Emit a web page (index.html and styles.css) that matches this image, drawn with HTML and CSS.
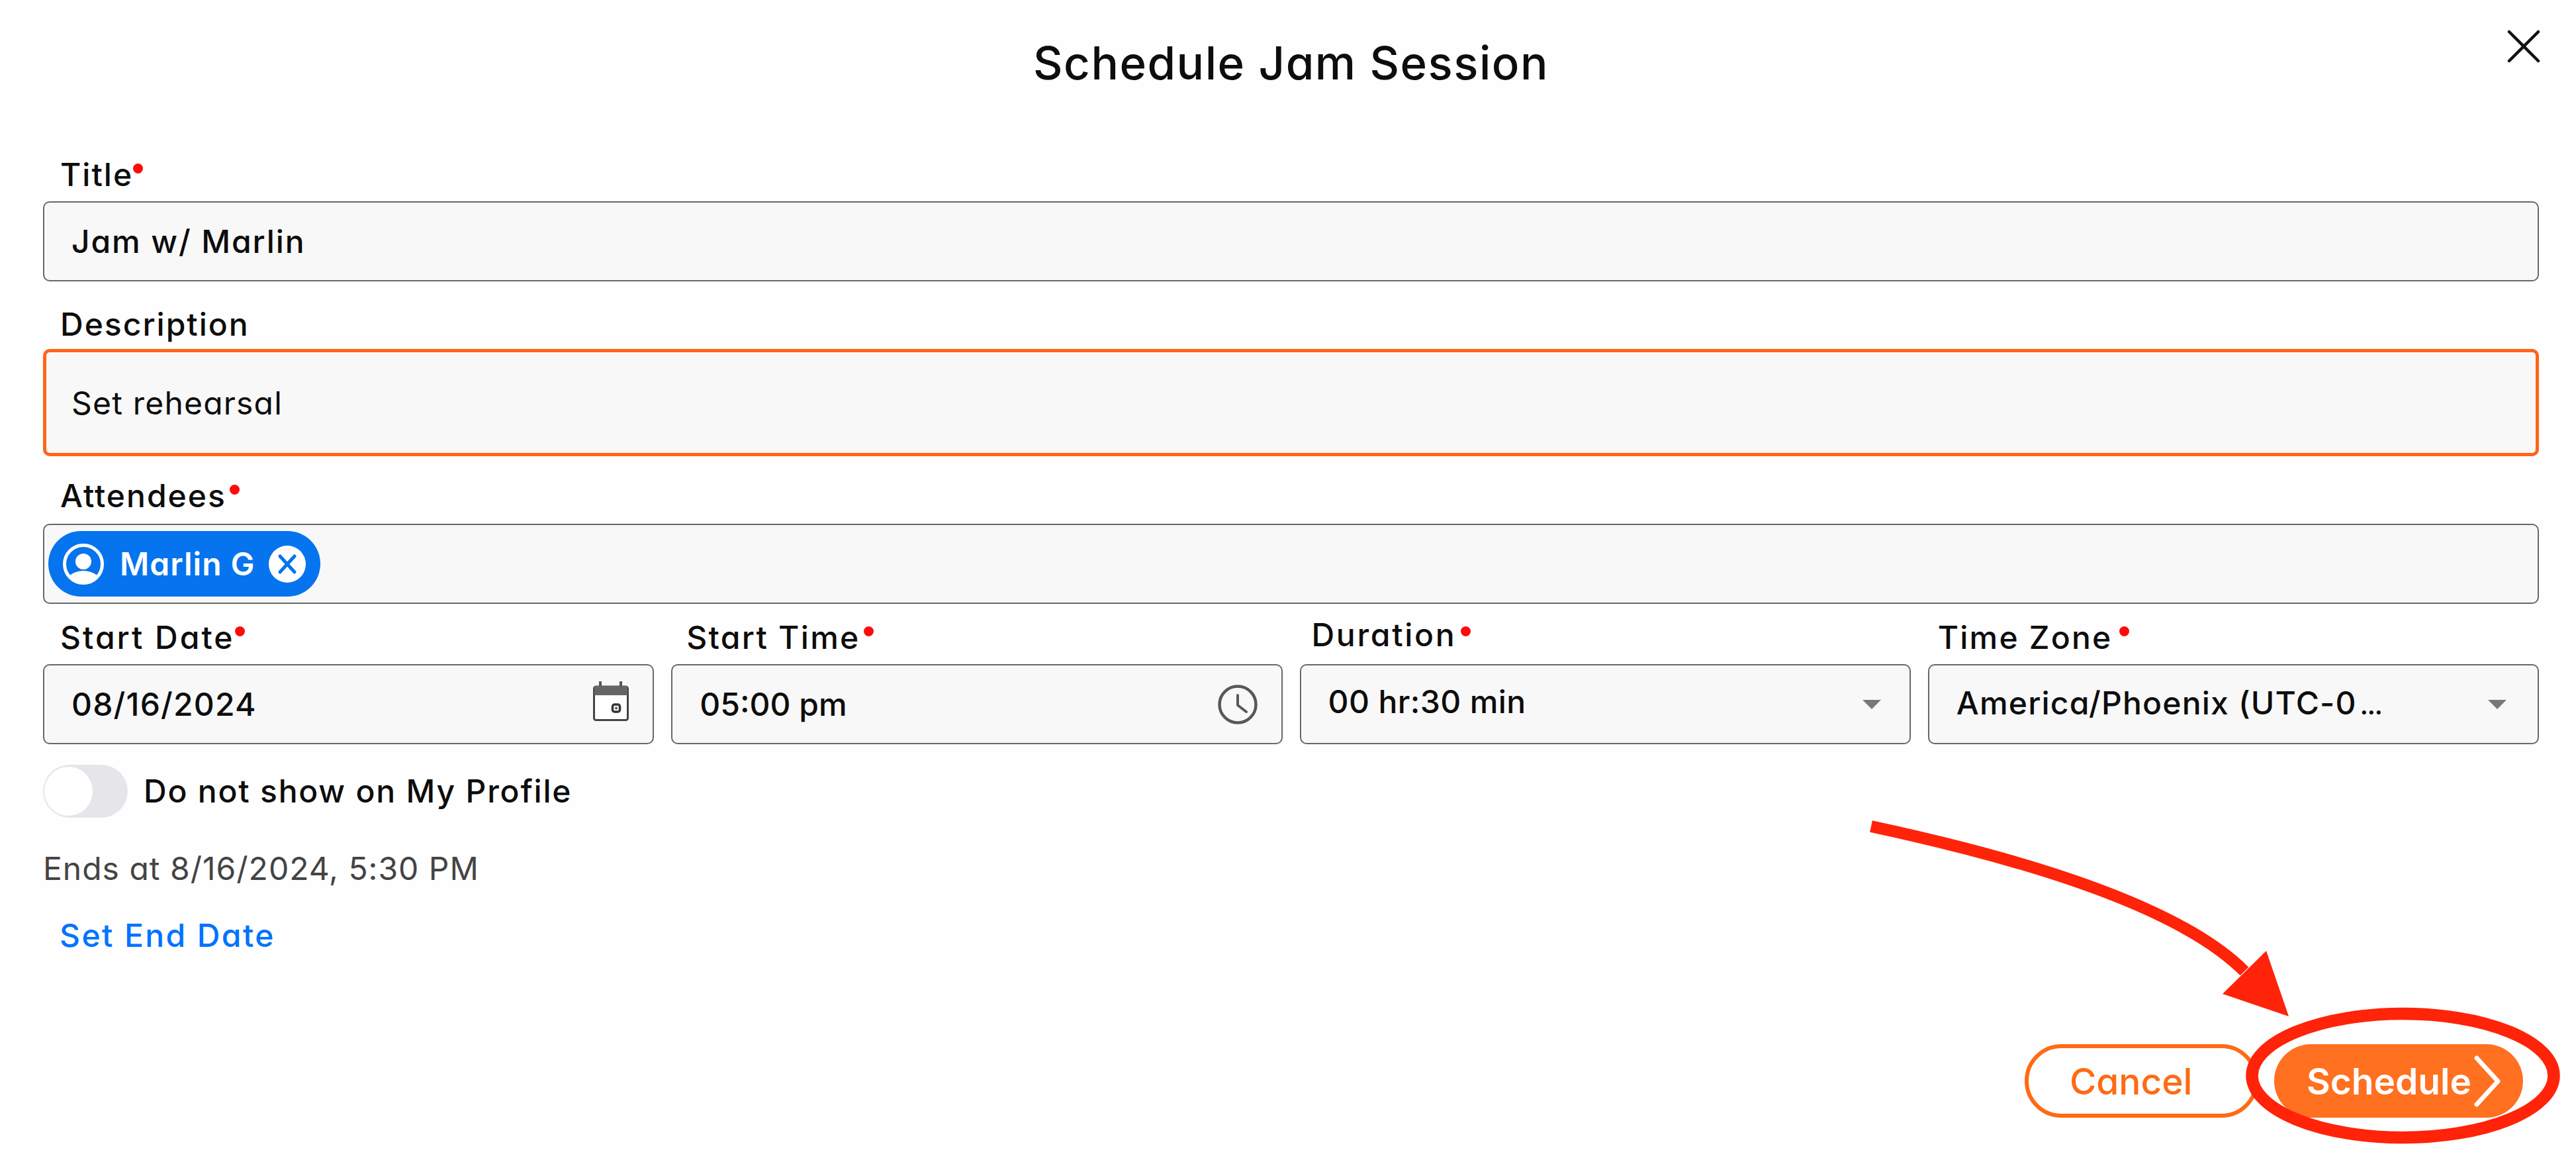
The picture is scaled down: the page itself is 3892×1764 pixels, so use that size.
FILE: index.html
```html
<!DOCTYPE html>
<html lang="en">
<head>
    <meta charset="UTF-8">
    <title>Schedule Jam Session</title>
    <link rel="stylesheet" href="styles.css">
</head>
<body>

    <div class="modal">
        <div class="modal-header">
            <h2>Schedule Jam Session</h2>
            <svg class="close-btn" viewBox="0 0 52 52"><path d="M4 4L48 48M48 4L4 48"/></svg>
        </div>

        <div class="form-group title">
            <div class="label">Title<i class="required"></i></div>
            <div class="field">Jam w/ Marlin</div>
        </div>

        <div class="form-group description">
            <div class="label">Description</div>
            <div class="field textarea">Set rehearsal</div>
        </div>

        <div class="form-group attendees">
            <div class="label">Attendees<i class="required"></i></div>
            <div class="field chips">
                <div class="chip">
                    <svg class="avatar" viewBox="0 0 62 62">
                        <circle cx="31" cy="31" r="28.5" fill="none" stroke="#fff" stroke-width="5"/>
                        <circle cx="31" cy="27" r="12" fill="#fff"/>
                        <path d="M10 48Q20 41 31 41T52 48Q43 60 31 60T10 48Z" fill="#fff"/>
                    </svg>
                    <span>Marlin G</span>
                    <svg class="chip-remove" viewBox="0 0 56 56">
                        <circle cx="28" cy="28" r="28" fill="#fff"/>
                        <path d="M17 16L39 40M39 16L17 40" stroke="#0674ee" stroke-width="5" stroke-linecap="round"/>
                    </svg>
                </div>
            </div>
        </div>

        <div class="row">
            <div class="form-group start-date">
                <div class="label">Start Date<i class="required"></i></div>
                <div class="field">
                    <span>08/16/2024</span>
                    <svg class="calendar" viewBox="0 0 54 60">
                        <path d="M11 1V8M42 1V8" stroke="#555" stroke-width="4" stroke-linecap="round"/>
                        <rect x="1.5" y="8" width="51" height="50.5" rx="3" fill="#fff" stroke="#444" stroke-width="3"/>
                        <path d="M2 7H52V21H2Z" fill="#646464"/>
                        <rect x="29.5" y="35" width="11" height="11" rx="3" fill="#fff" stroke="#333" stroke-width="3.5"/>
                        <circle cx="35" cy="40.5" r="2" fill="#555"/>
                    </svg>
                </div>
            </div>
            <div class="form-group start-time">
                <div class="label">Start Time<i class="required"></i></div>
                <div class="field">
                    <span>05:00 pm</span>
                    <svg class="clock" viewBox="0 0 60 60">
                        <circle cx="30" cy="30" r="27.5" fill="none" stroke="#58585a" stroke-width="4.5"/>
                        <path d="M30 16V31L43 41" fill="none" stroke="#58585a" stroke-width="4" stroke-linecap="round" stroke-linejoin="round"/>
                    </svg>
                </div>
            </div>
            <div class="form-group duration">
                <div class="label">Duration<i class="required"></i></div>
                <div class="field">
                    <span>00 hr:30 min</span>
                    <svg class="caret" viewBox="0 0 28 14"><path d="M0 0H28L14 14Z"/></svg>
                </div>
            </div>
            <div class="form-group time-zone">
                <div class="label">Time Zone<i class="required"></i></div>
                <div class="field">
                    <span>America/Phoenix (UTC-0<span class="more">...</span></span>
                    <svg class="caret" viewBox="0 0 28 14"><path d="M0 0H28L14 14Z"/></svg>
                </div>
            </div>
        </div>

        <div class="toggle-row">
            <div class="toggle"><div class="knob"></div></div>
            <span>Do not show on My Profile</span>
        </div>

        <div class="ends-at">Ends at 8/16/2024, 5:30 PM</div>
        <a class="end-date">Set End Date</a>

        <div class="buttons">
            <div class="btn cancel">Cancel</div>
            <div class="btn schedule">
                <span>Schedule</span>
                <svg class="chevron" viewBox="0 0 40 78"><path d="M4 4L36 39L4 74"/></svg>
            </div>
        </div>
    </div>

    <!-- arrow and circle pointing at the Schedule button -->
    <svg class="callout" viewBox="0 0 1112 564">
        <path d="M47 48Q486 142 611 267" fill="none" stroke="#ff230a" stroke-width="18"/>
        <path d="M644 236L678 335L578 301Z" fill="#ff230a"/>
        <ellipse cx="850.5" cy="424.5" rx="228" ry="93.5" fill="none" stroke="#ff230a" stroke-width="18.5"/>
    </svg>

</body>
</html>
```
FILE: styles.css
```css
* {
    box-sizing: border-box;
}
body {
    margin: 0;
    height: 1764px;
    overflow: hidden;
    background: #fefefe;
    color: #0d0d0d;
    font-family: Inter, "Open Sans", sans-serif;
    font-size: 48px;
    font-weight: 500;
    line-height: 60px;
    font-feature-settings: "cv11";
    white-space: nowrap;
}
.modal {
    padding: 0 56px 0 65px;
}
.modal-header {
    position: relative;
    height: 234px;
}
h2 {
    margin: 0;
    padding-top: 50px;
    font-size: 69px;
    font-weight: 500;
    line-height: 90px;
    letter-spacing: 1.5px;
    text-align: center;
}
.close-btn {
    position: absolute;
    top: 44px;
    right: -3px;
    width: 52px;
    height: 52px;
    fill: none;
    stroke: #111;
    stroke-width: 4.5;
    stroke-linecap: round;
}
.label {
    display: flex;
    height: 70px;
    padding-left: 26px;
    letter-spacing: 2px;
}
.required {
    width: 15px;
    height: 15px;
    margin: 13px 0 0 5px;
    border-radius: 50%;
    background: #ff0a0a;
}
.title .required {
    margin-left: 0;
}
.field {
    display: flex;
    align-items: center;
    height: 121px;
    padding: 0 36px 0 41px;
    border: 2px solid #66696b;
    border-radius: 10px;
    background: #f8f8f8;
    letter-spacing: 1.2px;
}
.field svg {
    margin-left: auto;
}
.title .field {
    letter-spacing: 1.9px;
}
.description {
    margin-top: 35px;
}
.description .label {
    height: 67px;
}
.textarea {
    height: 162px;
    padding: 2px 38px 0;
    border: 5px solid #ff641a;
    font-weight: 400;
}
.attendees {
    margin-top: 30px;
}
.attendees .label {
    height: 72px;
}
.chips {
    padding: 0 6px;
}
.chip {
    display: flex;
    align-items: center;
    width: 411px;
    height: 99px;
    padding-left: 22px;
    border-radius: 50px;
    background: #0674ee;
    color: #fff;
    font-weight: 600;
    letter-spacing: 1px;
}
.chip .avatar {
    width: 62px;
    height: 62px;
    margin: 0 24px 0 0;
}
.chip .chip-remove {
    width: 56px;
    height: 56px;
    margin: 0 22px 0 auto;
}
.row {
    display: grid;
    grid-template-columns: repeat(4, 1fr);
    gap: 26px;
    margin-top: 21px;
}
.start-date .label {
    letter-spacing: 3px;
}
.start-date .required {
    margin-left: 1px;
}
.calendar {
    width: 54px;
    height: 60px;
    margin-bottom: 9px;
}
.start-time .label {
    padding-left: 23px;
    letter-spacing: 2.3px;
}
.start-time .field {
    letter-spacing: 0;
}
.clock {
    width: 60px;
    height: 60px;
}
.duration .label {
    padding-left: 18px;
    letter-spacing: 2.7px;
    line-height: 52px;
}
.duration .required {
    margin-left: 7px;
}
.duration .field {
    letter-spacing: 0.4px;
}
.duration .field span {
    padding-bottom: 7px;
}
.time-zone .label {
    padding-left: 15px;
    letter-spacing: 2.2px;
}
.time-zone .required {
    margin-left: 11px;
}
.more {
    margin-left: 5px;
    font-size: 36px;
    font-weight: 700;
    letter-spacing: -1px;
}
.field .caret {
    width: 28px;
    height: 14px;
    margin-right: 7px;
    fill: #77787a;
}
.time-zone .caret {
    margin-right: 11px;
}
.toggle-row {
    display: flex;
    align-items: center;
    height: 80px;
    margin-top: 30px;
    padding-top: 2px;
    letter-spacing: 1.8px;
}
.toggle {
    width: 128px;
    height: 80px;
    margin-right: 24px;
    padding: 3px 2px;
    border-radius: 40px;
    background: #e6e5e9;
}
.knob {
    width: 73px;
    height: 74px;
    border-radius: 50%;
    background: #fff;
}
.ends-at {
    margin-top: 48px;
    color: #444;
    font-weight: 400;
    letter-spacing: 1px;
}
.end-date {
    display: block;
    margin-top: 41px;
    padding-left: 25px;
    color: #0073ff;
    letter-spacing: 2.4px;
}
.buttons {
    display: flex;
    justify-content: flex-end;
    gap: 24px;
    margin-top: 134px;
    padding-right: 24px;
    font-size: 55px;
}
.btn {
    display: flex;
    align-items: center;
    height: 111px;
    border-radius: 56px;
}
.cancel {
    width: 353px;
    padding-left: 62px;
    border: 6px solid #ff6a13;
    color: #ff6a13;
}
.schedule {
    width: 376px;
    padding-left: 49px;
    background: #ff7020;
    color: #fff;
    font-weight: 600;
}
.chevron {
    width: 40px;
    height: 78px;
    margin-left: auto;
    margin-right: 34px;
    fill: none;
    stroke: #fff;
    stroke-width: 7;
    stroke-linecap: round;
    stroke-linejoin: round;
}
.callout {
    position: absolute;
    left: 2780px;
    top: 1200px;
    width: 1112px;
    height: 564px;
}
```
